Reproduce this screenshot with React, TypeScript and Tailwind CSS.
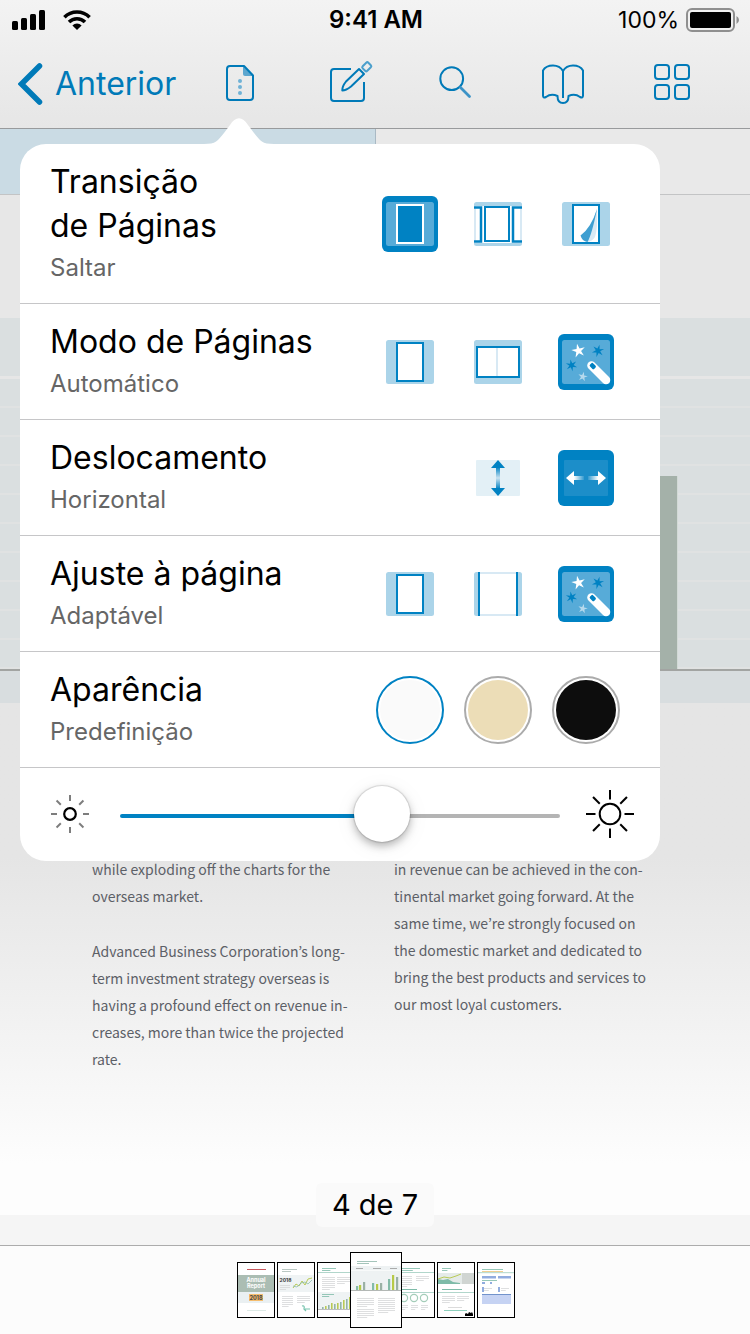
import { useState } from "react";
import type { CSSProperties, ReactNode } from "react";

const BLUE = "#0082c3";

function SignalIcon() {
  return (
    <svg viewBox="0 0 34 20" className="h-5 w-[34px]" aria-hidden="true">
      <rect x="0" y="11" width="6" height="9" rx="1.5" />
      <rect x="9" y="8" width="6" height="12" rx="1.5" />
      <rect x="18" y="4" width="6" height="16" rx="1.5" />
      <rect x="27" y="0" width="6" height="20" rx="1.5" />
    </svg>
  );
}

function WifiIcon() {
  return (
    <svg viewBox="0 0 28 20" className="h-5 w-7" aria-hidden="true">
      <g fill="none" stroke="#000" strokeWidth="3.6">
        <path d="M1.4 7.2 A18 18 0 0 1 26.6 7.2" />
        <path d="M6 12 A11.4 11.4 0 0 1 22 12" />
      </g>
      <path d="M14 20 L9.4 15.4 A6.6 6.6 0 0 1 18.6 15.4 Z" />
    </svg>
  );
}

function BatteryIcon() {
  return (
    <svg viewBox="0 0 54 24" className="h-6 w-[54px]" aria-hidden="true">
      <rect x="1" y="1" width="47" height="22" rx="5" fill="none" stroke="#8f8f8f" strokeWidth="2" />
      <rect x="4" y="4" width="41" height="16" rx="2" />
      <path d="M50.5 8 Q53 9.5 53 12 Q53 14.5 50.5 16 Z" fill="#8f8f8f" />
    </svg>
  );
}

function DocumentIcon() {
  return (
    <>
      <path d="M25 5 L35 15 H27 Q25 15 25 13 Z" fill="#5ca6cf" stroke="none" />
      <path d="M26 5 H12 Q9 5 9 8 V36 Q9 39 12 39 H32 Q35 39 35 36 V14.5 Z" />
      <g fill="#6fb2d6" stroke="none">
        <circle cx="22" cy="20" r="2" />
        <circle cx="22" cy="26" r="2" />
        <circle cx="22" cy="32" r="2" />
      </g>
    </>
  );
}

function ComposeIcon() {
  return (
    <>
      <path d="M25 8 H8 Q5 8 5 11 V37 Q5 40 8 40 H35 Q38 40 38 37 V21" />
      <path d="M33 8 L38 13 L25 25.5 Q20 29.5 16.3 29.5 Q16 25.5 20 20.5 Z" />
      <rect x="37.5" y="1.8" width="6.5" height="8" rx="1.5" transform="rotate(45 40.8 5.8)" stroke="#4b9fcc" />
    </>
  );
}

function SearchIcon() {
  return (
    <>
      <circle cx="17.7" cy="17.7" r="11.4" />
      <path d="M26.5 26.5 L35.5 35.5" stroke="#3c93c7" strokeWidth="2.8" strokeLinecap="round" />
    </>
  );
}

function BookIcon() {
  return (
    <path d="M21 37 V10 C19 6.5 15 4.5 11 4.5 C7 4.5 3 6 1 9.500 V34.5 Q1 37.5 4 36 C8 33 12 33.5 15.5 35 C15.5 40 18 42 21 42 C24 42 26.5 40 26.5 35 C30 33.5 34 33 38 36 Q41 37.5 41 34.5 V9.5 C39 6 35 4.5 31 4.5 C27 4.5 23 6.5 21 10" />
  );
}

function GridIcon() {
  return (
    <>
      <rect x="5" y="4" width="14" height="14" rx="3" />
      <rect x="25" y="4" width="14" height="14" rx="3" />
      <rect x="5" y="24" width="14" height="14" rx="3" />
      <rect x="25" y="24" width="14" height="14" rx="3" />
    </>
  );
}

const tools: { label: string; icon: ReactNode }[] = [
  { label: "Definições do documento", icon: <DocumentIcon /> },
  { label: "Anotar", icon: <ComposeIcon /> },
  { label: "Pesquisar", icon: <SearchIcon /> },
  { label: "Estrutura", icon: <BookIcon /> },
  { label: "Miniaturas", icon: <GridIcon /> },
];

function Header() {
  return (
    <header className="border-b border-[#989a9c] bg-linear-to-b from-[#f3f3f3] to-[#e6e6e6]">
      <div className="grid h-10 grid-cols-3 items-center pr-[10px] pl-3 leading-6">
        <div className="flex items-center gap-[17px]">
          <SignalIcon />
          <WifiIcon />
        </div>
        <span className="text-center text-2xl leading-6 font-semibold">9:41 AM</span>
        <div className="flex items-center justify-end gap-[7px]">
          <span className="text-[23px]">100%</span>
          <BatteryIcon />
        </div>
      </div>
      <nav className="flex h-[88px] items-center pr-14 pl-[18px] text-[#007ab8]">
        <button type="button" className="flex w-[200px] items-center gap-3 text-[32px] leading-10">
          <svg viewBox="0 0 25 42" className="h-[42px] w-[25px]" fill="none" stroke="currentColor" strokeWidth="5.5" strokeLinecap="round" aria-hidden="true">
            <path d="M21.5 3 L3.5 21 L21.5 39" />
          </svg>
          Anterior
        </button>
        <div className="flex flex-1 justify-between">
          {tools.map((tool) => (
            <button key={tool.label} type="button" aria-label={tool.label} className="size-11">
              <svg viewBox="0 1 44 44" className="size-11 overflow-visible" fill="none" stroke="currentColor" strokeWidth="2" strokeLinejoin="round" aria-hidden="true">
                {tool.icon}
              </svg>
            </button>
          ))}
        </div>
      </nav>
    </header>
  );
}

function Frame({ active }: { active?: boolean }) {
  return <rect x="4" y="6" width="48" height="44" rx="2.5" fill={active ? "#57abd8" : "#abd4e9"} />;
}

function SinglePage({ active }: { active?: boolean }) {
  return (
    <>
      <Frame active={active} />
      <rect x="15" y="9" width="26" height="38" fill={active ? BLUE : "#fff"} stroke={active ? "#fff" : BLUE} strokeWidth="2" />
    </>
  );
}

function ContinuousPages() {
  return (
    <>
      <Frame />
      <rect x="4" y="10" width="48" height="37" fill="#fff" />
      <rect x="4" y="10" width="2" height="36" fill="#d8e9f4" />
      <rect x="50" y="10" width="2" height="36" fill="#d8e9f4" />
      <g fill="none" stroke={BLUE}>
        <path d="M4 11.5 H11 V45.5 H4 M52 11.5 H43 V45.5 H52" strokeWidth="2.5" />
        <rect x="15" y="11" width="24" height="34" strokeWidth="2" />
      </g>
    </>
  );
}

function PageCurl() {
  return (
    <>
      <SinglePage />
      <path d="M39 13 Q40 32 37 41 Q34 46 28 46 Z" fill="#d8e9f4" />
      <path d="M39 13 Q34 38 29.5 46 Q24 45 22.5 39.5 Q33 32 39 13 Z" fill="#3f9fd1" />
    </>
  );
}

function DoublePage() {
  return (
    <>
      <Frame />
      <rect x="7" y="13" width="42" height="30" fill="#fff" stroke={BLUE} strokeWidth="2" />
      <rect x="26" y="14" width="2" height="28" fill="#d8e9f4" />
    </>
  );
}

function Star({ x, y, r, turn, fill, points = 5 }: { x: number; y: number; r: number; turn: number; fill: string; points?: number }) {
  const vertices = Array.from({ length: points * 2 }, (_, i) => {
    const radius = i % 2 ? r * 0.36 : r;
    const angle = (i * Math.PI) / points + (turn * Math.PI) / 180;
    return `${(x + radius * Math.sin(angle)).toFixed(2)},${(y - radius * Math.cos(angle)).toFixed(2)}`;
  });
  return <polygon points={vertices.join(" ")} fill={fill} />;
}

function Wand() {
  return (
    <>
      <Frame active />
      <Star x={20.5} y={16.8} r={7.2} turn={-12} fill="#fff" />
      <Star x={40} y={16.8} r={6.3} turn={14} fill={BLUE} points={6} />
      <Star x={13.5} y={31.3} r={6} turn={-10} fill={BLUE} points={6} />
      <Star x={24.8} y={42.7} r={5} turn={12} fill="#b5d9ed" />
      <path d="M33.5 31.5 L48 46" stroke="#fff" strokeWidth="8.5" strokeLinecap="round" />
      <rect x="31.8" y="29.8" width="6" height="4.5" rx="1.5" transform="rotate(45 34.8 32)" fill={BLUE} />
    </>
  );
}

function VerticalScroll() {
  return (
    <>
      <defs>
        <linearGradient id="fade-vertical" x1="0" y1="0" x2="0" y2="1">
          <stop offset="0" stopColor={BLUE} />
          <stop offset="0.5" stopColor="#c9e2f0" />
          <stop offset="1" stopColor={BLUE} />
        </linearGradient>
      </defs>
      <rect x="6" y="10" width="44" height="36" rx="1" fill="#e3f0f6" />
      <rect x="26" y="17" width="4" height="22" fill="url(#fade-vertical)" />
      <path d="M28 10 L35 18 H21 Z M28 46 L35 38 H21 Z" fill={BLUE} />
    </>
  );
}

function HorizontalScroll() {
  return (
    <>
      <defs>
        <linearGradient id="fade-left">
          <stop offset="0" stopColor="#fff" />
          <stop offset="1" stopColor="#fff" stopOpacity="0.1" />
        </linearGradient>
        <linearGradient id="fade-right">
          <stop offset="0" stopColor="#fff" stopOpacity="0.1" />
          <stop offset="1" stopColor="#fff" />
        </linearGradient>
      </defs>
      <rect x="6" y="10" width="44" height="36" rx="1" fill="#1c8ec9" />
      <rect x="16" y="26" width="10" height="4" fill="url(#fade-left)" />
      <rect x="30" y="26" width="10" height="4" fill="url(#fade-right)" />
      <path d="M8 28 L16 21 V35 Z M48 28 L40 21 V35 Z" fill="#fff" />
    </>
  );
}

function FitWidth() {
  return (
    <>
      <Frame />
      <rect x="10" y="6" width="36" height="44" fill="#d8e9f4" />
      <rect x="10" y="8" width="36" height="40" fill="#fff" />
      <rect x="8" y="6" width="2" height="44" fill={BLUE} />
      <rect x="46" y="6" width="2" height="44" fill={BLUE} />
    </>
  );
}

function Option({ label, active, children }: { label: string; active?: boolean; children: ReactNode }) {
  return (
    <div className="flex w-[88px] justify-center">
      <button type="button" aria-label={label} aria-pressed={!!active} className={active ? "size-14 rounded-md bg-[#0082c3]" : "size-14 rounded-md"}>
        <svg viewBox="0 0 56 56" className="size-14" aria-hidden="true">
          {children}
        </svg>
      </button>
    </div>
  );
}

function Swatch({ label, active, fill }: { label: string; active?: boolean; fill: string }) {
  return (
    <div className="flex w-[88px] justify-center">
      <button
        type="button"
        aria-label={label}
        aria-pressed={!!active}
        className={active ? "size-[68px] rounded-full border-2 border-[#0082c3] p-[2px]" : "size-[68px] rounded-full border-2 border-[#ababab] p-[2px]"}
      >
        <span className={`block size-full rounded-full ${fill}`} />
      </button>
    </div>
  );
}

function Setting({ title, value, children }: { title: ReactNode; value: string; children: ReactNode }) {
  return (
    <section className="flex items-center justify-between border-b border-[#c6c6c8] px-[30px] pt-4 pb-[15px]">
      <div>
        <h2 className="text-[32px] leading-11 text-black">{title}</h2>
        <p className="text-2xl leading-10 text-[#666]">{value}</p>
      </div>
      <div className="flex">{children}</div>
    </section>
  );
}

function Rays({ inner, outer }: { inner: number; outer: number }) {
  return (
    <>
      {[0, 45, 90, 135, 180, 225, 270, 315].map((angle) => (
        <line key={angle} x1="24" x2="24" y1={24 - inner} y2={24 - outer} transform={`rotate(${angle} 24 24)`} />
      ))}
    </>
  );
}

function Brightness() {
  const [level, setLevel] = useState(61);
  const fill = `linear-gradient(to right, #0082c3 ${level}%, #b4b4b4 ${level}%)`;
  return (
    <div className="flex h-[93px] items-center px-[26px] pb-px">
      <svg viewBox="0 0 48 48" className="size-12 shrink-0" fill="none" stroke="#7d7d7d" strokeWidth="2" aria-hidden="true">
        <Rays inner={13} outer={19} />
        <circle cx="24" cy="24" r="5.8" stroke="#000" strokeWidth="2.2" />
      </svg>
      <input
        type="range"
        min={0}
        max={100}
        value={level}
        onChange={(event) => setLevel(Number(event.target.value))}
        aria-label="Brilho"
        className="mx-[26px] mt-1 h-14 min-w-0 flex-1 appearance-none bg-transparent [&::-webkit-slider-runnable-track]:h-1 [&::-webkit-slider-runnable-track]:rounded-full [&::-webkit-slider-runnable-track]:bg-(image:--fill) [&::-webkit-slider-thumb]:-mt-7 [&::-webkit-slider-thumb]:size-14 [&::-webkit-slider-thumb]:appearance-none [&::-webkit-slider-thumb]:rounded-full [&::-webkit-slider-thumb]:bg-white [&::-webkit-slider-thumb]:shadow-[0_0_1px_1px_rgba(0,0,0,0.12),0_4px_8px_rgba(0,0,0,0.28),0_4px_24px_rgba(0,0,0,0.06)]"
        style={{ "--fill": fill } as CSSProperties}
      />
      <svg viewBox="0 0 48 48" className="size-12 shrink-0" fill="none" stroke="#000" strokeWidth="2" aria-hidden="true">
        <Rays inner={14.5} outer={24} />
        <circle cx="24" cy="24" r="10.3" />
      </svg>
    </div>
  );
}

function SettingsPopover() {
  return (
    <div role="dialog" aria-label="Definições" className="absolute top-[15px] left-5 z-10 w-[640px] max-w-[calc(100%-40px)] rounded-[26px] bg-white">
      <svg viewBox="0 0 70 27" className="absolute -top-[26px] left-[184px] h-[27px] w-[70px]" fill="#fff" aria-hidden="true">
        <path d="M0 27 V26 C12 26 13.5 23 20 15 L26 7 C31.5 -2 38.5 -2 44 7 L50 15 C56.5 23 58 26 70 26 V27 Z" />
      </svg>
      <Setting title={<>Transição<br />de Páginas</>} value="Saltar">
        <Option label="Saltar" active><SinglePage active /></Option>
        <Option label="Contínuo"><ContinuousPages /></Option>
        <Option label="Enrolar"><PageCurl /></Option>
      </Setting>
      <Setting title="Modo de Páginas" value="Automático">
        <Option label="Simples"><SinglePage /></Option>
        <Option label="Duplo"><DoublePage /></Option>
        <Option label="Automático" active><Wand /></Option>
      </Setting>
      <Setting title="Deslocamento" value="Horizontal">
        <Option label="Vertical"><VerticalScroll /></Option>
        <Option label="Horizontal" active><HorizontalScroll /></Option>
      </Setting>
      <Setting title="Ajuste à página" value="Adaptável">
        <Option label="Página"><SinglePage /></Option>
        <Option label="Largura"><FitWidth /></Option>
        <Option label="Adaptável" active><Wand /></Option>
      </Setting>
      <Setting title="Aparência" value="Predefinição">
        <Swatch label="Predefinição" active fill="bg-[#fafafa]" />
        <Swatch label="Sépia" fill="bg-[#ecddb7]" />
        <Swatch label="Noite" fill="bg-[#0d0d0d]" />
      </Setting>
      <Brightness />
    </div>
  );
}

function DocumentPage() {
  return (
    <div className="flex flex-1 flex-col">
      <div className="flex h-[66px] border-b border-[#c3c4c5]">
        <div className="flex-1 border-r border-[#a9b9c4] bg-[#cadbe4]" />
        <div className="flex-1 bg-[#e9e9e9]" />
      </div>
      <div className="h-[123px] bg-[#e7e7e7]" />
      <div className="h-[58px] bg-[#dadfe0]" />
      <div className="relative flex h-[295px] flex-col border-t-3 border-b-2 border-t-[#e6e6e6] border-b-[#a2a4a2] bg-[#dadfe0]">
        {Array.from({ length: 10 }, (_, i) => (
          <div key={i} className="flex-1 border-b-2 border-[#e0e2e2] last:border-b-0" />
        ))}
        <div className="absolute right-[72px] bottom-0 h-[193px] w-10 border-r border-[#d2dad6] bg-[#a4b1a9]" />
      </div>
      <div className="h-8 bg-[#d8dddf]" />
      <div className="flex flex-1 items-start gap-[38px] bg-linear-to-b from-[#e5e5e5] from-30% to-[#fdfdfd] to-90% px-[92px] pt-[153px] font-['Noto_Sans_CJK_KR','Noto_Sans',sans-serif] text-sm leading-[27px] text-[#5c6067]">
        <div className="flex-1 whitespace-nowrap">
          <p>while exploding off the charts for the<br />overseas market.</p>
          <p className="mt-7">
            Advanced Business Corporation’s long-<br />term investment strategy overseas is<br />having a profound effect on revenue in-<br />creases, more than twice the projected<br />rate.
          </p>
        </div>
        <p className="flex-1 whitespace-nowrap">
          in revenue can be achieved in the con-<br />tinental market going forward. At the<br />same time, we’re strongly focused on<br />the domestic market and dedicated to<br />bring the best products and services to<br />our most loyal customers.
        </p>
      </div>
      <div className="h-[30px] bg-[#f5f5f5]" />
    </div>
  );
}

function Lines({ x, y, width, count, color = "#d6d8d9" }: { x: number; y: number; width: number; count: number; color?: string }) {
  return (
    <>
      {Array.from({ length: count }, (_, i) => (
        <rect key={i} x={x} y={y + i * 2} width={i === count - 1 ? width * 0.6 : width} height="0.8" fill={color} />
      ))}
    </>
  );
}

const thumbnails: ReactNode[] = [
  <>
    <rect x="9" y="6" width="19" height="1" fill="#c8565b" />
    <rect x="0" y="12" width="36" height="17" fill="#abbdb3" />
    <text x="18" y="19" textAnchor="middle" fontSize="5.5" fontWeight="700" fill="#fff">Annual</text>
    <text x="18" y="25" textAnchor="middle" fontSize="5.5" fontWeight="700" fill="#fff">Report</text>
    <rect x="0" y="29" width="36" height="11" fill="#eaf0f2" />
    <rect x="11" y="31" width="14" height="7" fill="#f5bd6e" />
    <text x="18" y="36.500" textAnchor="middle" fontSize="5.5" fontWeight="700" fill="#444">2018</text>
    <rect x="9" y="47" width="19" height="0.7" fill="#cfe1db" />
  </>,
  <>
    <Lines x={4} y={6} width={15} count={2} color="#a9bbb4" />
    <rect x="0" y="12" width="36" height="17" fill="#eff3f4" />
    <text x="1.5" y="19" fontSize="5" fontWeight="700" fill="#333">2018</text>
    <Lines x={2} y={22} width={10} count={3} />
    <path d="M15 25 L18 21 L21 23 L24 18 L27 22 L30 16 L34 15" fill="none" stroke="#b9ca55" />
    <path d="M15 23 L19 24 L23 20 L27 19 L30 21 L34 17" fill="none" stroke="#83b7a6" strokeWidth="0.7" />
    <Lines x={4} y={33} width={11} count={6} />
    <Lines x={19} y={33} width={13} count={4} />
    <path d="M24 43 Q27 42 26 46 L28 48 M27 46 H32" fill="none" stroke="#76c3ad" strokeWidth="1.2" />
  </>,
  <>
    <Lines x={4} y={5} width={14} count={2} color="#7ebba8" />
    <rect x="0" y="9" width="36" height="0.6" fill="#7ebba8" />
    <Lines x={4} y={14} width={13} count={7} />
    <Lines x={19} y={14} width={13} count={4} />
    <rect x="0" y="29" width="36" height="18" fill="#eff3f4" />
    <Lines x={4} y={31} width={12} count={2} color="#7ebba8" />
    {[2, 3, 4, 6, 5, 6, 7, 9, 10, 12].map((h, i) => (
      <rect key={i} x={4 + i * 3} y={46 - h} width="1.6" height={h} fill={i % 2 ? "#b9ca55" : "#92b5a8"} />
    ))}
    <rect x="0" y="46" width="36" height="0.6" fill="#999" />
  </>,
  <>
    <Lines x={6} y={8} width={20} count={2} color="#8fb7aa" />
    <rect x="0" y="13" width="50" height="25" fill="#eef2f3" />
    <rect x="0" y="17" width="50" height="0.6" fill="#fff" />
    <rect x="5" y="15" width="7" height="0.8" fill="#999" />
    <rect x="22" y="15" width="8" height="0.8" fill="#999" />
    <rect x="39" y="15" width="7" height="0.8" fill="#999" />
    {[[5, 4], [8, 5], [12, 8], [21, 7], [25, 6], [29, 7], [37, 11], [41, 15], [45, 13]].map(([x, h], i) => (
      <rect key={i} x={x} y={37 - h} width="2.2" height={h} fill={["#83bba8", "#b7ca48", "#9ab1a5"][i % 3]} />
    ))}
    <rect x="0" y="37" width="50" height="0.8" fill="#a4a9a6" />
    <Lines x={6} y={45} width={17} count={5} />
    <Lines x={6} y={56} width={17} count={5} />
    <Lines x={27} y={45} width={17} count={8} />
  </>,
  <>
    <Lines x={4} y={5} width={18} count={2} color="#7ebba8" />
    <rect x="0" y="9" width="36" height="0.6" fill="#7ebba8" />
    <Lines x={2} y={13} width={12} count={6} />
    <Lines x={18} y={13} width={13} count={3} />
    <rect x="2" y="26" width="17" height="1" fill="#7ebba8" />
    <rect x="0" y="29" width="36" height="0.6" fill="#7ebba8" />
    {[6, 16, 26].map((x) => (
      <g key={x}>
        <circle cx={x} cy="35" r="3.6" fill="none" stroke="#a4cdb9" strokeWidth="1.2" />
        <Lines x={x - 3} y={42} width={7} count={3} />
      </g>
    ))}
  </>,
  <>
    <Lines x={4} y={5} width={9} count={2} color="#7ebba8" />
    <rect x="0" y="10" width="36" height="11" fill="#e5ebe9" />
    <rect x="24" y="10" width="12" height="11" fill="#d0d5d2" />
    <path d="M0 21 V16 L5 17 L10 16 L15 19 L22 20 V21 Z" fill="#7ebba8" />
    <path d="M0 16 L6 14 L12 15 L18 13 L23 11" fill="none" stroke="#b9ca55" />
    <rect x="4" y="26" width="20" height="1" fill="#7ebba8" />
    <rect x="0" y="29" width="36" height="0.6" fill="#7ebba8" />
    <Lines x={4} y={33} width={13} count={4} />
    <Lines x={19} y={33} width={12} count={3} />
    <rect x="10" y="44" width="14" height="0.7" fill="#ccc" />
    <rect x="6" y="47" width="23" height="1" fill="#8ed0bd" />
    <path d="M27 53 V51 L28 50 L30 51 L31 49 L33 50 L34 49 L35 51 V53 Z" fill="#000" />
  </>,
  <>
    <rect x="4" y="6" width="21" height="0.8" fill="#7ebba8" />
    <rect x="4" y="8" width="21" height="0.8" fill="#edc276" />
    <rect x="0" y="9.5" width="36" height="0.6" fill="#7ebba8" />
    <rect x="4" y="13" width="14" height="2.5" fill="#91acdf" />
    <rect x="20" y="13" width="13" height="2.5" fill="#91acdf" />
    <rect x="4" y="17" width="15" height="0.8" fill="#7ebba8" />
    <rect x="4" y="19" width="3" height="2" fill="#91acdf" />
    <rect x="12" y="19" width="2" height="2" fill="#91acdf" />
    <Lines x={6} y={25} width={8} count={2} />
    <rect x="4" y="24" width="2" height="5" fill="#91acdf" />
    <rect x="20" y="24" width="2" height="5" fill="#91acdf" />
    <Lines x={23} y={25} width={8} count={2} />
    <rect x="4" y="31" width="29" height="10" fill="#c6d3f3" />
    <rect x="4" y="31" width="29" height="1" fill="#7293cb" />
  </>,
];

function ThumbnailBar() {
  return (
    <footer className="border-t border-[#acacac] bg-[#fcfcfc]">
      <div className="flex h-[88px] items-center justify-center gap-[2px] pl-[2px]">
        {thumbnails.map((drawing, i) =>
          i === 3 ? (
            <button key={i} type="button" aria-label="Página 4" aria-current="page" className="z-10 -mx-[7px] h-[76px] w-[52px] border border-black bg-white">
              <svg viewBox="0 0 50 74" className="h-[74px] w-[50px]" aria-hidden="true">{drawing}</svg>
            </button>
          ) : (
            <button key={i} type="button" aria-label={`Página ${i + 1}`} className="h-14 w-[38px] border border-black bg-white">
              <svg viewBox="0 0 36 54" className="h-[54px] w-9" aria-hidden="true">{drawing}</svg>
            </button>
          ),
        )}
      </div>
    </footer>
  );
}

export default function App() {
  return (
    <div className="flex min-h-screen flex-col bg-[#fcfcfc] font-['Inter','Liberation_Sans',sans-serif] text-black">
      <Header />
      <main className="relative flex flex-1 flex-col">
        <DocumentPage />
        <SettingsPopover />
        <div className="absolute inset-x-0 bottom-[18px] flex justify-center">
          <p className="rounded-md bg-[#fafafa] px-4 text-[29px] leading-11">4 de 7</p>
        </div>
      </main>
      <ThumbnailBar />
    </div>
  );
}
